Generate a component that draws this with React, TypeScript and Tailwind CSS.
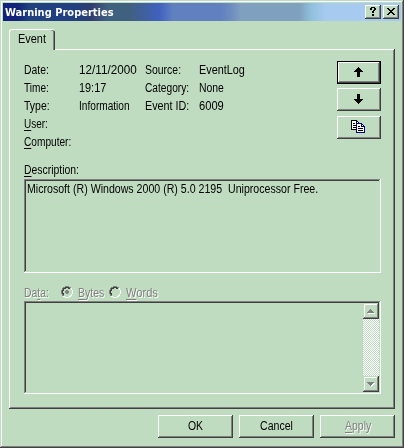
import React, { useLayoutEffect, useRef, useState } from "react";
import clsx from "clsx";

function Label({ w, className, children }: { w: number; className?: string; children: React.ReactNode }) {
  const ref = useRef<HTMLSpanElement>(null);
  const [scale, setScale] = useState(1);
  useLayoutEffect(() => {
    if (ref.current) setScale(w / ref.current.offsetWidth);
  }, [w]);
  return (
    <span className={clsx("block h-[18px]", className)} style={{ width: w }}>
      <span
        ref={ref}
        className="inline-block origin-left whitespace-pre underline-offset-2"
        style={{ transform: `scaleX(${scale})` }}
      >
        {children}
      </span>
    </span>
  );
}

/* One-pixel bitmap art: each character picks a colour, "." is empty. */
const INK: Record<string, string> = { "#": "#000000", w: "#ffffff", g: "#808080", d: "#404040", n: "#000080", c: "#c0dcc0" };
function Pixels({ rows, className }: { rows: string[]; className?: string }) {
  const width = Math.max(...rows.map((r) => r.length));
  return (
    <svg width={width} height={rows.length} shapeRendering="crispEdges" className={clsx("block shrink-0", className)}>
      {rows.flatMap((row, y) =>
        [...row].map((ch, x) => (ch === "." ? null : <rect key={`${x}-${y}`} x={x} y={y} width={1} height={1} fill={INK[ch]} />))
      )}
    </svg>
  );
}

const UP = ["....#....", "...###...", "..#####..", ".#######.", "#########", "...###...", "...###...", "...###...", "...###...", "...###..."];
const DOWN = [...UP].reverse();
const HELP = ["..####..", ".##..##.", ".##..##.", "....##..", "...##...", "...##...", "........", "...##...", "...##..."];
const CLOSE = ["##....##", ".##..##.", "..####..", "...##...", "..####..", ".##..##.", "##....##"];
const COPY = [
  "######.........",
  "#wwww##........",
  "#wwww#w#.......",
  "#w##wnnnnnn....",
  "#wwwwnwwwwnn...",
  "#w###nwwwwnwn..",
  "#wwwwnw##wnnnn.",
  "#w###nwwwwwwwn.",
  "#wwwwnw#####wn.",
  "#####nwwwwwwwn.",
  ".....nw#####wn.",
  ".....nwwwwwwwn.",
  ".....nnnnnnnnn.",
];
const SCROLL_UP = ["...g....", "..ggg...", ".ggggg..", "ggggggg.", ".wwwwwww"];
const SCROLL_DOWN = ["ggggggg.", ".gggggww", "..gggww.", "...gww..", "....w..."];
const RADIO = [
  "....gggg....",
  "..ggddddgg..",
  ".gdddccddcw.",
  ".gdc.....cw.",
  "gddc......cw",
  "gdc.......cw",
  "gdc.......cw",
  "gddc......cw",
  ".gdc.....cw.",
  ".ggc....cww.",
  "..wwccccww..",
  "....wwww....",
];
const RADIO_ON = RADIO.map((r, y) =>
  y === 4 || y === 7 ? r.slice(0, 5) + "gg" + r.slice(7) : y === 5 || y === 6 ? r.slice(0, 4) + "gggg" + r.slice(8) : r
);

const RAISED = "shadow-[inset_-1px_-1px_#404040,inset_1px_1px_#fff,inset_-2px_-2px_#808080]";
const RAISED_SOFT = "shadow-[inset_-1px_-1px_#404040,inset_1px_1px_#c0dcc0,inset_-2px_-2px_#808080,inset_2px_2px_#fff]";
const SUNKEN = "shadow-[inset_-1px_-1px_#fff,inset_1px_1px_#808080,inset_-2px_-2px_#c0dcc0,inset_2px_2px_#404040]";
const DISABLED = "text-[#808080] [text-shadow:1px_1px_#fff]";

function Button({ className, bevel = RAISED, children }: { className?: string; bevel?: string; children: React.ReactNode }) {
  return <button className={clsx("flex shrink-0 items-center justify-center bg-[#c0dcc0]", bevel, className)}>{children}</button>;
}

function Field({ a, aw, b, bw, c, cw, d, dw }: { a: string; aw: number; b: string; bw: number; c: string; cw: number; d: string; dw: number }) {
  return (
    <div className="grid h-[18px] grid-cols-[55px_66px_54px_60px]">
      <Label w={aw}>{a}</Label>
      <Label w={bw}>{b}</Label>
      <Label w={cw}>{c}</Label>
      <Label w={dw}>{d}</Label>
    </div>
  );
}

export default function App() {
  return (
    <div className={clsx("flex h-[448px] w-[404px] flex-col bg-[#c0dcc0] p-[3px] font-['Liberation_Sans',sans-serif] text-[12.5px] leading-[18px] text-black", RAISED_SOFT)}>
      <header className="flex h-[18px] shrink-0 items-center bg-[linear-gradient(90deg,#102080_0px,#102478_14px,#204080_26px,#204080_72px,#303c70_88px,#406080_104px,#406080_126px,#4060a0_142px,#4060c0_156px,#6080c0_170px,#6080c0_218px,#7090c0_230px,#80a0c0_238px,#80a0c0_296px,#90c0dc_308px,#a6caf0_322px)] px-[2px]">
        <Label w={109} className="pt-px font-['DejaVu_Sans',sans-serif] text-[11px] font-bold text-white">Warning Properties</Label>
        <div className="ml-auto flex gap-[2px]">
          <Button className="h-[14px] w-4 pr-px pb-px"><Pixels rows={HELP} /></Button>
          <Button className="h-[14px] w-4 pr-px pb-px"><Pixels rows={CLOSE} /></Button>
        </div>
      </header>

      <div className="mt-2 ml-[6px] flex h-5 shrink-0">
        <div className="z-10 h-[21px] w-[46px] rounded-t-[3px] border-t border-l border-white bg-[#c0dcc0] pl-[8px] shadow-[inset_-1px_0_#404040,inset_-2px_0_#808080]">
          <Label w={28}>Event</Label>
        </div>
      </div>

      <main className={clsx("ml-[6px] flex h-[360px] w-[386px] shrink-0 flex-col pl-[15px]", RAISED)}>
        <div className="flex">
          <section className="w-[313px] pt-[12px]">
            <Field a="Date:" aw={25} b="12/11/2000" bw={58} c="Source:" cw={36} d="EventLog" dw={46} />
            <Field a="Time:" aw={25} b="19:17" bw={27} c="Category:" cw={44} d="None" dw={25} />
            <Field a="Type:" aw={26} b="Information" bw={51} c="Event ID:" cw={44} d="6009" dw={25} />
            <Label w={24}><u>U</u>ser:</Label>
            <Label w={47}><u>C</u>omputer:</Label>
          </section>
          <nav className="flex flex-col pt-[12px]">
            <Button className="h-[23px] w-[44px] border border-black pr-px pb-[2px]"><Pixels rows={UP} /></Button>
            <Button className="mt-1 h-[23px] w-[44px] pr-px pb-[2px]"><Pixels rows={DOWN} /></Button>
            <Button className="mt-[5px] h-[23px] w-[44px] pr-px pb-[2px]"><Pixels rows={COPY} /></Button>
          </nav>
        </div>

        <div className="mt-[10px] h-[18px]"><Label w={55}><u>D</u>escription:</Label></div>
        <div className={clsx("h-[94px] w-[357px] pt-px pl-[3px]", SUNKEN)}>
          <Label w={291}>{"Microsoft (R) Windows 2000 (R) 5.0 2195  Uniprocessor Free."}</Label>
        </div>

        <div className={clsx("flex h-7 pt-[11px]", DISABLED)}>
          <Label w={25}>Da<u>t</u>a:</Label>
          <Pixels rows={RADIO_ON} className="mt-[2px] ml-[12px]" />
          <Label w={26} className="ml-[5px]"><u>B</u>ytes</Label>
          <Pixels rows={RADIO} className="mt-[2px] ml-[5px]" />
          <Label w={32} className="ml-[5px]"><u>W</u>ords</Label>
        </div>
        <div className={clsx("flex h-[93px] w-[357px] justify-end p-[2px]", SUNKEN)}>
          <div className="flex w-4 flex-col justify-between bg-[conic-gradient(#fff_25%,#c0dcc0_0_50%,#fff_0_75%,#c0dcc0_0)] bg-[length:2px_2px]">
            <Button className="h-4 w-4" bevel={RAISED_SOFT}><Pixels rows={SCROLL_UP} /></Button>
            <Button className="h-4 w-4" bevel={RAISED_SOFT}><Pixels rows={SCROLL_DOWN} /></Button>
          </div>
        </div>
      </main>

      <footer className="mt-[6px] flex justify-end gap-[6px] pr-[6px]">
        <Button className="h-[23px] w-[75px] pb-[2px]"><Label w={15}>OK</Label></Button>
        <Button className="h-[23px] w-[75px] pb-[2px]"><Label w={33}>Cancel</Label></Button>
        <Button className={clsx("h-[23px] w-[75px] pb-px", DISABLED)}><Label w={26}><u>A</u>pply</Label></Button>
      </footer>
    </div>
  );
}
